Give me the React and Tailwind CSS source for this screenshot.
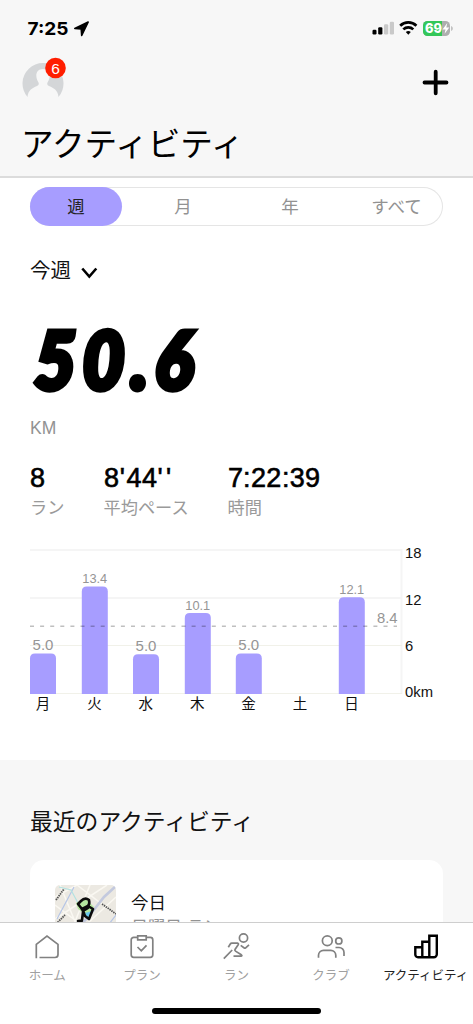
import React from "react";

// Weekly distance, in chart pixels. Bars stand on y = 144.
const bars = [
  { day: "月", km: "5.0", x: 0, top: 103.5, size: 15 },
  { day: "火", km: "13.4", x: 51.8, top: 36.5, size: 12.8 },
  { day: "水", km: "5.0", x: 103, top: 104.2, size: 15 },
  { day: "木", km: "10.1", x: 154.8, top: 63, size: 12.8 },
  { day: "金", km: "5.0", x: 205.8, top: 103.5, size: 15 },
  { day: "土" },
  { day: "日", km: "12.1", x: 308.8, top: 47.2, size: 12.8 },
];

// xs: pen position of each glyph
const stats = [
  { value: "8", label: "ラン", width: "w-[73.5px]", xs: "0" },
  { value: "8'44''", label: "平均ペース", width: "w-[124px]", xs: "0 15.8 22.5 38 53.5 62" },
  { value: "7:22:39", label: "時間", width: "w-[120px]", xs: "0 15 23 38.3 54 61.7 77" },
];

function StatusBar() {
  return (
    <div className="flex h-[56px] items-start justify-between pl-[27px] pr-[19px] pt-[18px]">
      <div className="flex items-center gap-[5px]">
        <svg width="42" height="20" viewBox="0 0 42 20">
          <text x="0.5" y="16.6" fontSize="18" fontWeight="700" fontFamily="Inter, sans-serif" textLength="41" lengthAdjust="spacingAndGlyphs">7:25</text>
        </svg>
        <svg width="16" height="16" viewBox="0 0 16 16" className="mt-px">
          <path d="M14.2 1 7.7 14.5 7.2 8 .8 7.5Z" stroke="#000" strokeWidth="1.6" strokeLinejoin="round" />
        </svg>
      </div>
      <svg width="82" height="20" viewBox="0 0 82 20">
        <rect x="0.5" y="11.8" width="4" height="4.7" rx="1.2" />
        <rect x="6.2" y="9.3" width="4.2" height="7.2" rx="1.2" />
        <rect x="12" y="6.2" width="4.2" height="10.3" rx="1.2" fill="#c9c9c9" />
        <rect x="17.8" y="3.8" width="4.2" height="12.7" rx="1.2" fill="#c9c9c9" />
        <g fill="none" stroke="#000" strokeWidth="2.7">
          <path d="M28.2 7.7a11.6 11.6 0 0 1 16.2 0" />
          <path d="M31.3 11.4a7.2 7.2 0 0 1 10 0" />
        </g>
        <path d="M33.8 14.1a3.8 3.8 0 0 1 5 0l-2.5 2.6Z" />
        <rect x="51" y="3" width="27" height="15" rx="4.6" fill="#aeaeae" />
        <path d="M55.6 3H70v15H55.6A4.6 4.6 0 0 1 51 13.4V7.6A4.6 4.6 0 0 1 55.6 3Z" fill="#34c759" />
        <path d="M79.2 8v5c2-.7 2-4.3 0-5Z" fill="#b5b5b5" />
        <text x="53" y="15.3" fontSize="13.5" fontWeight="800" fill="#fff" fontFamily="Inter, sans-serif" textLength="17" lengthAdjust="spacingAndGlyphs">69</text>
        <path d="m75.3 5-4.8 6.4h3l-.9 4.3 4.7-6.3h-3Z" fill="#fff" />
      </svg>
    </div>
  );
}

function Header() {
  return (
    <header className="h-[178px] shrink-0 border-b-2 border-[#dcdcdc] bg-[#f7f7f7]">
      <StatusBar />
      <div className="flex h-[56px] justify-between px-[22px]">
        <svg width="46" height="46" viewBox="0 0 46 46">
          <path d="M5.5 41A20.5 20.5 0 1 1 36.5 41C36 34.5 32 32 27 30 25 29 25 28 25.5 26.5 29.5 20 28 13 21 13S12.5 20 16.5 26.5c.5 1.5.5 2.500-1.500 3.500C10 32 6 34.500 5.500 41Z" fill="#d4d6d8" />
          <circle cx="33.5" cy="12" r="10.3" fill="#ff1e00" />
          <text x="33.5" y="17.6" fontSize="15.5" textAnchor="middle" fill="#fff" fontFamily="Liberation Sans, sans-serif">6</text>
        </svg>
        <svg width="30" height="30" viewBox="0 0 30 30" className="mt-[12px]">
          <path d="M14.7 3.7v21.6M3.5 14.5H25.5" stroke="#000" strokeWidth="3.8" strokeLinecap="round" />
        </svg>
      </div>
      <h1 className="pl-[21px] pt-[2px] text-[32.6px] leading-[62px] text-black">アクティビティ</h1>
    </header>
  );
}

function RangeTabs() {
  return (
    <div className="flex h-[39px] rounded-full text-[17.5px] leading-[40px] text-[#929292] shadow-[inset_0_0_0_1px_#e5e5e5]">
      <div className="w-[92px] rounded-full bg-[#a79dff] text-center text-[#242424]">週</div>
      <div className="w-[122px] text-center">月</div>
      <div className="w-[92px] text-center">年</div>
      <div className="flex-1 pl-[14px] text-center">すべて</div>
    </div>
  );
}

function WeekChart() {
  return (
    <svg width="410" height="170" viewBox="0 0 410 170" className="mt-[29px] block overflow-visible" fontFamily="Liberation Sans, Noto Sans CJK JP, sans-serif">
      <path d="M0 0H371.5V144" fill="none" stroke="#f5f5f5" strokeWidth="2" />
      <path d="M0 48H371" stroke="#f5f5f5" strokeWidth="1.8" />
      <path d="M0 95.5H372M0 143.5H372" stroke="#f1f1e9" />
      {bars.map((b, i) => (
        <g key={b.day}>
          {b.km && (
            <>
              <path d={`M${b.x} 144V${b.top + 5}q0-5 5-5h16q5 0 5 5V144Z`} fill="#a79dff" />
              <text x={b.x + 13} y={b.top - 3.2} fontSize={b.size} textAnchor="middle" fill="#959595">{b.km}</text>
            </>
          )}
          <text x={13 + i * 51.4} y="158.7" fontSize="14.5" textAnchor="middle" fill="#111">{b.day}</text>
        </g>
      ))}
      <path d="M0 76.2H367" stroke="#000" strokeOpacity=".25" strokeWidth="1.4" strokeDasharray="4 6.1" />
      <text x="367.5" y="73.3" fontSize="14.8" textAnchor="end" fill="#959595">8.4</text>
      <g fontSize="14.8" fill="#111">
        <text x="375" y="8.3">18</text>
        <text x="375" y="54.5">12</text>
        <text x="375" y="101">6</text>
        <text x="375" y="147">0km</text>
      </g>
    </svg>
  );
}

function MapThumb() {
  return (
    <svg width="61" height="61" viewBox="0 0 61 61" className="rounded-[5px] bg-[#ece9e2]">
      <path d="M0 12 22 0M0 34 52 0M8 61 61 12M0 20 40 50M22 0 61 30M5 0 30 61M35 0 10 61" stroke="#faf8f2" strokeWidth="1.5" />
      <path d="M61 1 49 12 38 26 8 61" fill="none" stroke="#c3c9de" strokeWidth="2.6" />
      <path d="M19 2 2 34M61 30 47 48" stroke="#b5c5e6" strokeWidth="1.2" />
      <path d="M4 2 16 5 23 18" fill="none" stroke="#b3e2e1" strokeWidth="1.2" />
      <path d="m21 18 9-5 9 9-7 9-9-7Z" fill="#b5e79f" />
      <path d="m30 28 7-2-4 8Z" fill="#69c8ed" />
      <g fill="none" stroke="#0c0c0c" strokeWidth="2.6" strokeLinejoin="round" strokeLinecap="round">
        <path d="M26 16q4-4 8-1 1 4-1 6l-6 3-4-5Z" />
        <path d="m27 24 2 4M33 21l5 3-4 10-4-3-2-5 5-3M28 27l-1 8M23 36q4-1 4 2" />
      </g>
      <path d="m1 15 8-11M1 39l9-9M47 19l14 10" stroke="#555" strokeWidth="1.8" strokeDasharray="1.5 .8" />
    </svg>
  );
}

function TabItem({ label, active, children }) {
  return (
    <div className={`flex flex-1 flex-col items-center ${active ? "text-black" : "text-[#818181]"}`}>
      <svg width="30" height="30" viewBox="0 0 30 30" fill="none" stroke="currentColor" strokeWidth={active ? 2.4 : 1.7}>
        {children}
      </svg>
      <span className={`mt-[4px] whitespace-nowrap text-[12.5px] leading-[20px] ${active ? "text-[#222]" : "text-[#a0a0a0]"}`}>{label}</span>
    </div>
  );
}

function TabBar() {
  return (
    <nav className="h-[102px] shrink-0 border-t border-[#cecece] bg-white">
      <div className="flex h-[85px] pt-[9px]">
        <TabItem label="ホーム">
          <path d="M4.3 26.3V12.4L15 4l11 8.4v10.1a3 3 0 0 1-3 3H7.5" />
        </TabItem>
        <TabItem label="プラン">
          <path d="M10.5 5.4H6.7a2.5 2.5 0 0 0-2.5 2.5v14.9a2.5 2.5 0 0 0 2.5 2.5h16.6a2.5 2.5 0 0 0 2.5-2.5V7.9a2.5 2.5 0 0 0-2.5-2.5h-4M10.7 3.8h8.5v4h-8.5ZM10.5 15l3.8 3.8 5.2-5.5" />
        </TabItem>
        <TabItem label="ラン">
          <circle cx="22.5" cy="6" r="4.1" />
          <path d="M7.3 15.3 9.3 12q.5-.8 1.5-.8h5.7q1.5.3.7 1.6l-3.2 4.7q-.5 1 .5 1.6l5.800 3.700q1.300 1-.2 1.400h-7.600M2.800 26.700l8.400-8.700M19.700 13.300l3.500 2.700q.8.400 1.500-.2l3.300-3" />
        </TabItem>
        <TabItem label="クラブ">
          <circle cx="11.3" cy="8.8" r="4.9" />
          <circle cx="22.8" cy="8.9" r="3.1" />
          <path d="M2.5 25.8v-2.5a5 5 0 0 1 5-5h7.3a5 5 0 0 1 5 5v2.5M19.5 15.5H23a5 5 0 0 1 5 5v3.5" />
        </TabItem>
        <TabItem label="アクティビティ" active>
          <path d="M4.3 15.3h7v10H7a2.7 2.7 0 0 1-2.7-2.7ZM11.3 9.7h7v15.6h-7ZM18.3 3.7h7.5v18.6a3 3 0 0 1-3 3h-4.5Z" />
        </TabItem>
      </div>
      <div className="mx-auto h-[6px] w-[169px] rounded-full bg-black" />
    </nav>
  );
}

export default function App() {
  return (
    <div className="flex h-[1024px] w-[473px] flex-col overflow-hidden bg-white font-['Liberation_Sans','Noto_Sans_CJK_JP',sans-serif] text-[#111]">
      <Header />
      <main className="min-h-0 flex-1 overflow-hidden">
        <section className="h-[582px] px-[30px] pt-[9px]">
          <RangeTabs />
          <div className="mt-[30px] flex h-[30px] items-center gap-[10px]">
            <span className="text-[20.5px]">今週</span>
            <svg width="17" height="14" viewBox="0 0 17 14" className="mt-[3px]">
              <path d="m1.3 2.5 7 8 7-8" fill="none" stroke="#000" strokeWidth="2.6" />
            </svg>
          </div>
          <svg width="200" height="80" viewBox="0 0 200 80" className="mt-[32px] block overflow-visible" fontFamily="Lato, sans-serif" fontWeight="900" fontStyle="italic">
            <text transform="translate(4 70.5) skewX(-1) scale(.9 1)" x="0 53.5 107.5 134" y="0" fontSize="79.5" stroke="#000" strokeWidth="6">50.6</text>
          </svg>
          <p className="mt-[19px] text-[17.5px] leading-[22px] text-[#929292]">KM</p>
          <div className="mt-[24px] flex">
            {stats.map((s) => (
              <div key={s.label} className={s.width}>
                <svg width="100" height="30" viewBox="0 0 100 30" className="block">
                  <text x={s.xs} y="24" fontSize="27" fontFamily="Liberation Sans, sans-serif" fill="#000" stroke="#000" strokeWidth=".6">{s.value}</text>
                </svg>
                <p className="pt-[2px] text-[17.2px] leading-[26px] text-[#9a9a9a]">{s.label}</p>
              </div>
            ))}
          </div>
          <WeekChart />
        </section>
        <section className="h-full bg-[#f7f7f7] px-[30px] pt-[43px]">
          <h2 className="text-[22.8px] leading-[38px]">最近のアクティビティ</h2>
          <div className="mt-[19px] flex h-[120px] gap-[15px] rounded-[14px] bg-white pl-[25px] pt-[25px]">
            <MapThumb />
            <div className="pt-[7px]">
              <p className="text-[17.5px] leading-[22px]">今日</p>
              <p className="mt-[3px] text-[17px] leading-[22px] text-[#929292]">日曜日 ラン</p>
            </div>
          </div>
        </section>
      </main>
      <TabBar />
    </div>
  );
}
